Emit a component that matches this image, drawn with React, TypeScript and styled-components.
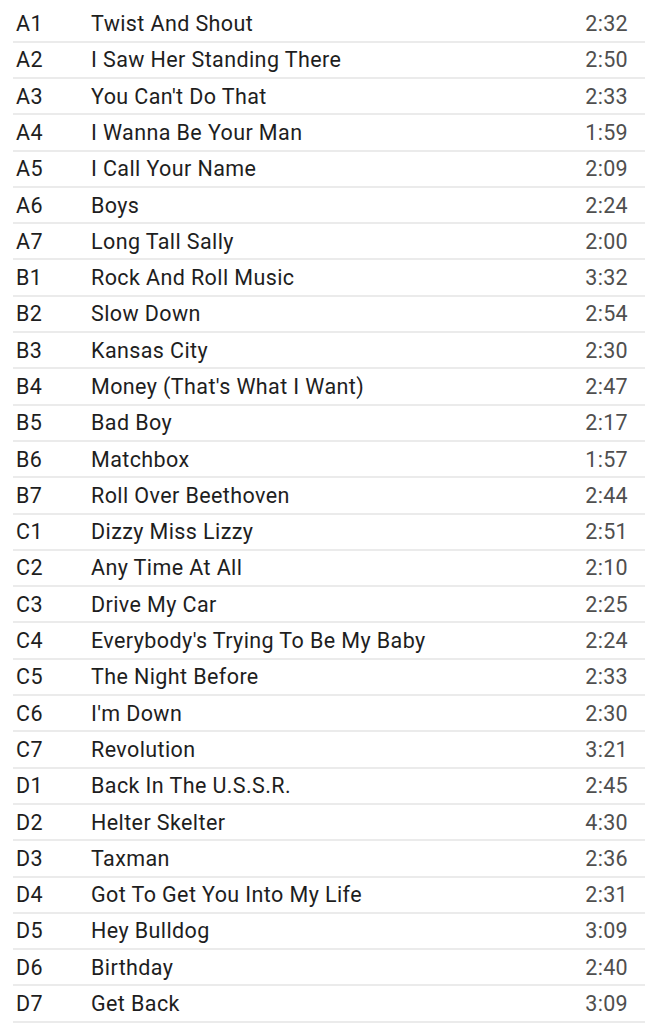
import { createGlobalStyle } from 'styled-components';
import styled from 'styled-components';

const GlobalStyle = createGlobalStyle`
  html, body {
    margin: 0;
    padding: 0;
    background: #ffffff;
  }
  body {
    font-family: Roboto, 'Noto Sans', sans-serif;
  }
`;

const TrackList = styled.div`
  display: flex;
  flex-direction: column;
  padding: 6.4px 12px 0 13px;
`;

const TrackRow = styled.div`
  display: grid;
  grid-template-columns: 75px 1fr auto;
  align-items: center;
  height: 36.3px;
  box-sizing: border-box;
  padding: 0 17px 0 3px;
  border-bottom: 2px solid #ebebeb;
  font-size: 21.5px;
  letter-spacing: 0.4px;
`;

const Position = styled.span`
  color: #1e1e1e;
`;

const Title = styled.span`
  color: #1e1e1e;
  white-space: nowrap;
`;

const Duration = styled.span`
  color: #4f4f4f;
  text-align: right;
  letter-spacing: 0.3px;
`;

const tracks: [string, string, string][] = [
  ['A1', 'Twist And Shout', '2:32'],
  ['A2', 'I Saw Her Standing There', '2:50'],
  ['A3', "You Can't Do That", '2:33'],
  ['A4', 'I Wanna Be Your Man', '1:59'],
  ['A5', 'I Call Your Name', '2:09'],
  ['A6', 'Boys', '2:24'],
  ['A7', 'Long Tall Sally', '2:00'],
  ['B1', 'Rock And Roll Music', '3:32'],
  ['B2', 'Slow Down', '2:54'],
  ['B3', 'Kansas City', '2:30'],
  ['B4', "Money (That's What I Want)", '2:47'],
  ['B5', 'Bad Boy', '2:17'],
  ['B6', 'Matchbox', '1:57'],
  ['B7', 'Roll Over Beethoven', '2:44'],
  ['C1', 'Dizzy Miss Lizzy', '2:51'],
  ['C2', 'Any Time At All', '2:10'],
  ['C3', 'Drive My Car', '2:25'],
  ['C4', "Everybody's Trying To Be My Baby", '2:24'],
  ['C5', 'The Night Before', '2:33'],
  ['C6', "I'm Down", '2:30'],
  ['C7', 'Revolution', '3:21'],
  ['D1', 'Back In The U.S.S.R.', '2:45'],
  ['D2', 'Helter Skelter', '4:30'],
  ['D3', 'Taxman', '2:36'],
  ['D4', 'Got To Get You Into My Life', '2:31'],
  ['D5', 'Hey Bulldog', '3:09'],
  ['D6', 'Birthday', '2:40'],
  ['D7', 'Get Back', '3:09'],
];

const App = () => (
  <>
    <GlobalStyle />
    <TrackList>
      {tracks.map(([pos, title, time]) => (
        <TrackRow key={pos}>
          <Position>{pos}</Position>
          <Title>{title}</Title>
          <Duration>{time}</Duration>
        </TrackRow>
      ))}
    </TrackList>
  </>
);

export default App;
